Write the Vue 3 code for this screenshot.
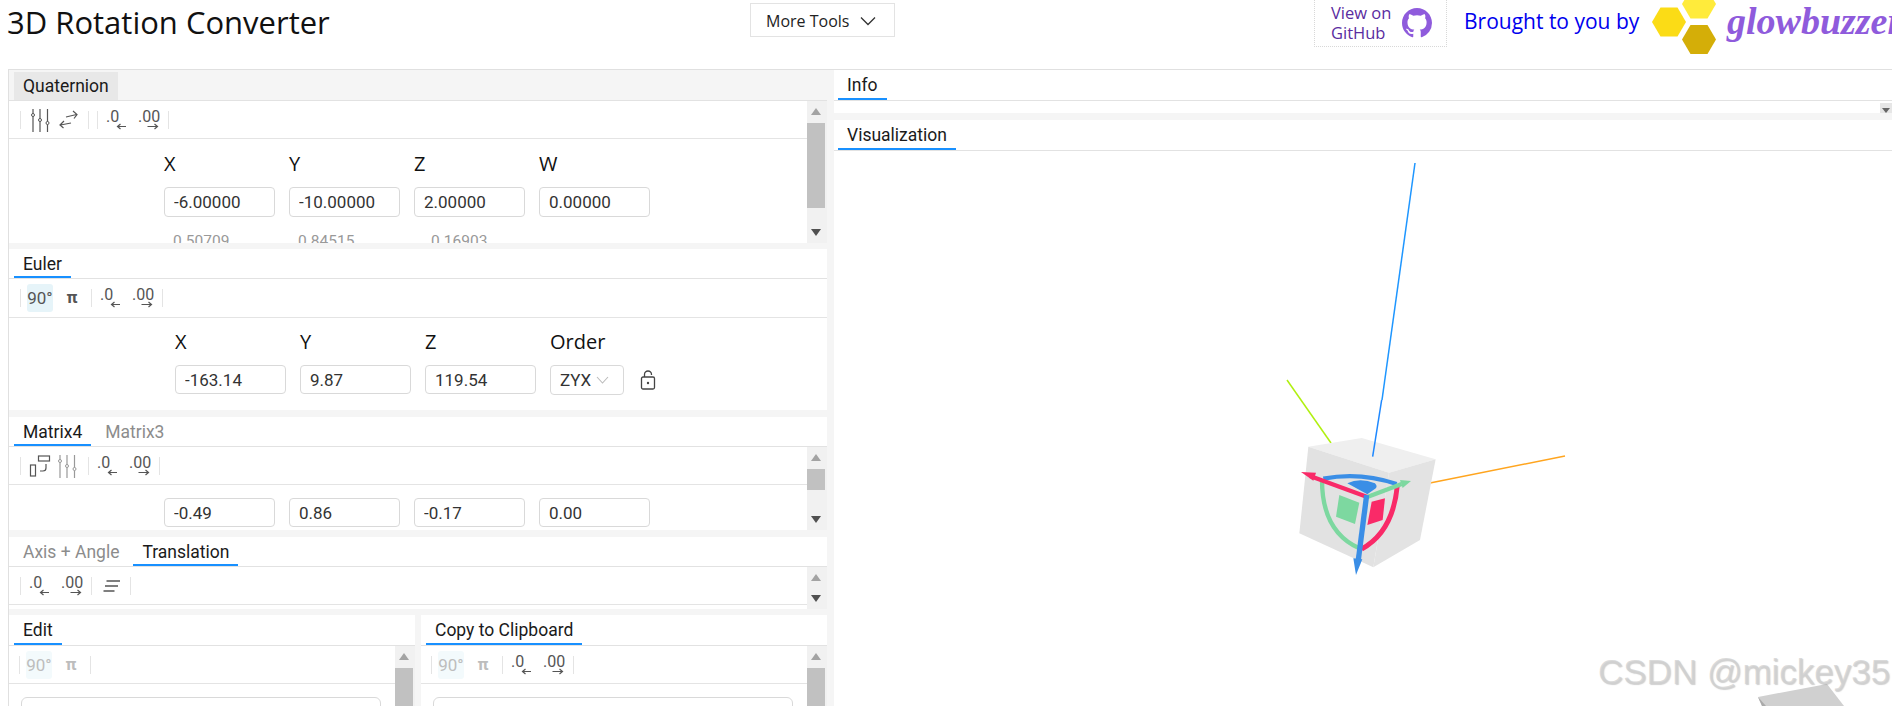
<script setup>
const panels = [
  {
    key: 'q', cls: 'p-q wide tight tall-head',
    tabs: [{ label: 'Quaternion', on: true }],
    tools: ['sep', 'sliders', 'swap', 'sep', 'gap', 'sep', 'dec', 'inc', 'sep'],
    scroll: { thumb: 85 },
    labels: ['X', 'Y', 'Z', 'W'],
    values: ['-6.00000', '-10.00000', '2.00000', '0.00000'],
    hints: ['0.50709', '0.84515', '0.16903', ''],
  },
  {
    key: 'e', cls: 'p-e wide',
    tabs: [{ label: 'Euler', on: true }],
    tools: ['sep', 'deg', 'pi', 'sep', 'dec', 'inc', 'sep'],
    labels: ['X', 'Y', 'Z', 'Order'],
    values: ['-163.14', '9.87', '119.54'],
    order: 'ZYX',
  },
  {
    key: 'm', cls: 'p-m wide',
    tabs: [{ label: 'Matrix4', on: true }, { label: 'Matrix3' }],
    tools: ['sep', 'rotate', 'sliders-soft', 'sep', 'dec', 'inc', 'sep'],
    scroll: { thumb: 21 },
    values: ['-0.49', '0.86', '-0.17', '0.00'],
  },
  {
    key: 't', cls: 'p-t wide tight',
    tabs: [{ label: 'Axis + Angle' }, { label: 'Translation', on: true }],
    tools: ['sep', 'dec', 'inc', 'sep', 'lines', 'sep'],
    scroll: { none: true },
  },
  {
    key: 'edit', cls: 'p-x tall-head dim',
    tabs: [{ label: 'Edit', on: true }],
    tools: ['sep', 'deg', 'pi', 'sep'],
    scroll: { thumb: 60 },
    box: true,
  },
  {
    key: 'copy', cls: 'p-x tall-head dim-first',
    tabs: [{ label: 'Copy to Clipboard', on: true }],
    tools: ['sep', 'deg', 'pi', 'sep', 'dec', 'inc', 'sep'],
    scroll: { thumb: 60 },
    box: true,
  },
]

const G = 'translate(1260 400) scale(.3333)'
const hex = (cx, cy) =>
  [[cx - 17, cy], [cx - 8.5, cy - 14.5], [cx + 8.5, cy - 14.5], [cx + 17, cy], [cx + 8.5, cy + 14.5], [cx - 8.5, cy + 14.5]]
    .map((p) => p.join(',')).join(' ')
</script>

<template>
  <div class="page">
    <svg class="sprite" width="0" height="0" aria-hidden="true">
      <symbol id="i-sliders" viewBox="0 0 32 28">
        <path d="M9 3v23M16 3v23M23.500 3v23" stroke="currentColor" stroke-width="1.200" fill="none" />
        <circle cx="9" cy="9" r="1.500" fill="#fff" stroke="currentColor" />
        <circle cx="16" cy="14" r="1.500" fill="#fff" stroke="currentColor" />
        <circle cx="23.500" cy="17" r="1.500" fill="#fff" stroke="currentColor" />
      </symbol>
      <symbol id="i-swap" viewBox="0 0 29 28">
        <path d="M10 11l10.500-2.500M17 5l4 3.500-3 4M15 17l-10.500 2M8 15l-4 4 3.500 3" stroke="currentColor" stroke-width="1.200" fill="none" />
      </symbol>
      <symbol id="i-rotate" viewBox="0 0 32 28">
        <rect x="6.500" y="13" width="5" height="11" fill="none" stroke="currentColor" stroke-width="1.200" />
        <rect x="14.500" y="4" width="11" height="5" fill="none" stroke="currentColor" stroke-width="1.200" />
        <path d="M22 12v4q0 3-3 3h-3" fill="none" stroke="currentColor" stroke-width="1.200" />
      </symbol>
      <symbol id="i-lines" viewBox="0 0 32 28">
        <path d="M11.500 9h13.500M10 14h13M8.500 19h11" fill="none" stroke="currentColor" stroke-width="1.400" />
      </symbol>
    </svg>

    <header class="top">
      <h1 class="title">3D Rotation Converter</h1>
      <button class="more">
        <span>More Tools</span>
        <svg width="16" height="10" viewBox="0 0 16 10"><path d="M1 1.500l7 7 7-7" fill="none" stroke="#333" stroke-width="1.300" /></svg>
      </button>
      <a class="gh">
        <span class="gh-text">View on<br />GitHub</span>
        <svg width="30" height="32" viewBox="0 0 16 16"><path fill="#8f5bdc" d="M8 0C3.580 0 0 3.580 0 8c0 3.540 2.290 6.530 5.470 7.590.4.070.55-.170.55-.380 0-.190-.010-.820-.010-1.490-2.010.370-2.530-.490-2.690-.940-.090-.230-.480-.940-.820-1.130-.280-.150-.680-.520-.010-.530.630-.010 1.080.580 1.230.820.720 1.210 1.870.870 2.330.660.070-.520.280-.870.510-1.070-1.780-.200-3.640-.890-3.640-3.950 0-.870.310-1.590.820-2.150-.080-.200-.360-1.020.080-2.120 0 0 .670-.210 2.200.820a7.500 7.500 0 0 1 4 0c1.530-1.040 2.200-.820 2.200-.820.440 1.100.160 1.920.080 2.120.510.560.820 1.270.820 2.150 0 3.070-1.870 3.750-3.650 3.950.290.250.540.730.540 1.480 0 1.070-.010 1.930-.010 2.200 0 .210.150.460.550.380A8.010 8.010 0 0 0 16 8c0-4.420-3.580-8-8-8z" /></svg>
      </a>
      <span class="brought">Brought to you by</span>
      <svg class="hex" width="68" height="60" viewBox="1650 0 68 60">
        <polygon :points="hex(1669, 22)" fill="#fbdc16" />
        <polygon :points="hex(1699, 4)" fill="#ffeb3b" />
        <polygon :points="hex(1699, 39.500)" fill="#d4ae08" />
      </svg>
      <span class="brand">glowbuzzer</span>
    </header>

    <main class="main">
      <section class="left">
        <article v-for="p in panels" :key="p.key" class="panel" :class="p.cls">
          <div class="head">
            <span v-for="t in p.tabs" :key="t.label" class="tab" :class="{ on: t.on }">{{ t.label }}</span>
          </div>
          <div class="body">
            <div class="scroller">
              <div class="tools">
                <template v-for="(t, i) in p.tools" :key="i">
                  <i v-if="t === 'sep'" class="sep"></i>
                  <i v-else-if="t === 'gap'" class="gap"></i>
                  <span v-else-if="t === 'deg'" class="btn txt"><b class="hi">90°</b></span>
                  <span v-else-if="t === 'pi'" class="btn txt pi">π</span>
                  <span v-else-if="t === 'dec'" class="btn deci">
                    <em>.0</em>
                    <svg width="32" height="7" viewBox="0 0 32 7"><path d="M25 3.500h-8.500M19.500 1l-3 2.500 3 2.500" stroke="currentColor" stroke-width="1.200" fill="none" /></svg>
                  </span>
                  <span v-else-if="t === 'inc'" class="btn deci">
                    <em>.00</em>
                    <svg width="32" height="7" viewBox="0 0 32 7"><path d="M14.500 3.500h10M21.500 1l3 2.500-3 2.500" stroke="currentColor" stroke-width="1.200" fill="none" /></svg>
                  </span>
                  <svg v-else-if="t === 'swap'" class="btn swap"><use href="#i-swap" /></svg>
                  <svg v-else-if="t === 'sliders-soft'" class="btn soft"><use href="#i-sliders" /></svg>
                  <svg v-else class="btn"><use :href="'#i-' + t" /></svg>
                </template>
              </div>
              <div v-if="p.values" class="fields" :class="{ order: p.order }">
                <span v-for="l in p.labels" :key="l" class="label">{{ l }}</span>
                <input v-for="v in p.values" :key="v" class="inp" :value="v" readonly />
                <div v-if="p.order" class="select">
                  <span>{{ p.order }}</span>
                  <svg width="13" height="8" viewBox="0 0 13 8"><path d="M1 1l5.500 6L12 1" fill="none" stroke="#bbb" stroke-width="1.100" /></svg>
                </div>
                <svg v-if="p.order" class="lock" width="16" height="20" viewBox="0 0 16 20">
                  <rect x="1.500" y="7" width="13" height="12" rx="1.500" fill="none" stroke="#444" stroke-width="1.300" />
                  <path d="M4.500 7V4.500a3.500 3.500 0 0 1 7 0V5" fill="none" stroke="#444" stroke-width="1.300" />
                  <circle cx="8" cy="13" r="1.200" fill="#444" />
                </svg>
                <span v-for="(h, i) in p.hints" :key="i" class="hint">{{ h }}</span>
              </div>
              <div v-if="p.box" class="box"></div>
            </div>
            <div v-if="p.scroll" class="bar" :class="{ none: p.scroll.none }">
              <i class="up"></i>
              <i v-if="p.scroll.thumb" class="thumb" :style="{ height: p.scroll.thumb + 'px' }"></i>
              <i class="down"></i>
            </div>
          </div>
        </article>
      </section>

      <section class="right">
        <article class="info">
          <div class="head"><span class="tab on">Info</span></div>
          <div class="info-body"><i class="split"></i></div>
        </article>
        <article class="viz">
          <div class="head"><span class="tab on">Visualization</span></div>
          <svg class="scene" width="1058" height="555" viewBox="834 151 1058 555">
            <line x1="1415" y1="163" x2="1382" y2="400" stroke="#1e96ff" stroke-width="1.500" />
            <line x1="1287" y1="380" x2="1331" y2="443" stroke="#b0f010" stroke-width="1.500" />
            <line x1="1565" y1="456" x2="1430" y2="483" stroke="#ffa51f" stroke-width="1.500" />
            <g :transform="G">
              <polygon points="145,140 305,114 527,178 387,218" fill="#efefef" />
              <polygon points="145,140 387,218 340,502 118,400" fill="#e2e2e2" />
              <polygon points="387,218 527,178 480,420 340,502" fill="#e3e3e3" />
              <line x1="365" y1="0" x2="338" y2="170" stroke="#1e88ff" stroke-width="4.500" />
              <path d="M186 240Q186 395 298 445" fill="none" stroke="#7dd8a0" stroke-width="13" />
              <path d="M412 255Q400 395 305 447" fill="none" stroke="#f92a68" stroke-width="15" />
              <path d="M190 236Q300 215 410 252" fill="none" stroke="#3a8ee6" stroke-width="13" />
              <path d="M262 250Q300 232 345 250Q357 262 340 270L322 283Z" fill="#3a8ee6" />
              <polygon points="238,285 298,308 285,372 228,350" fill="#7dd8a0" />
              <polygon points="335,305 375,295 368,360 322,375" fill="#f92a68" />
              <line x1="322" y1="291" x2="150" y2="228" stroke="#f92a68" stroke-width="13" />
              <polygon points="123,216 168,218 160,242" fill="#f92a68" />
              <line x1="322" y1="291" x2="425" y2="252" stroke="#7dd8a0" stroke-width="13" />
              <polygon points="453,243 420,240 428,264" fill="#7dd8a0" />
              <line x1="320" y1="285" x2="295" y2="480" stroke="#3a8ee6" stroke-width="16" />
              <polygon points="288,525 280,475 307,478" fill="#3a8ee6" />
            </g>
            <polygon points="1758,697 1827,684 1844,706 1762,706" fill="#d0d0d0" />
            <polygon points="1758,697 1762,706 1766,706" fill="#aaaaaa" />
          </svg>
        </article>
      </section>
    </main>

    <div class="mark">CSDN @mickey35</div>
  </div>
</template>

<style>
html, body { margin: 0; background: #fff; }
</style>

<style scoped>
.page {
  position: relative;
  width: 1892px;
  height: 706px;
  overflow: hidden;
  background: #fff;
  font-family: Roboto, "Liberation Sans", sans-serif;
  color: #1a1a1a;
}
.sprite { position: absolute; }

/* header */
.top {
  display: flex;
  height: 69px;
  overflow: hidden;
  font-family: "Open Sans", "Noto Sans", sans-serif;
}
.top > * { flex: none; }
.title {
  width: 743px;
  margin: 0 0 0 7px;
  font-size: 31px;
  font-weight: 400;
  line-height: 44px;
  color: #111;
  white-space: nowrap;
}
.more {
  display: flex;
  align-items: center;
  justify-content: space-between;
  box-sizing: border-box;
  width: 145px;
  height: 34px;
  margin-top: 3px;
  padding: 2px 18px 0 15px;
  background: #fff;
  border: 1px solid #e3e3e3;
  font: 16px "Open Sans", sans-serif;
  color: #222;
}
.gh {
  display: flex;
  align-items: center;
  justify-content: space-between;
  box-sizing: border-box;
  width: 133px;
  height: 47px;
  margin-left: 419px;
  padding: 0 14px 0 16px;
  border: 1px dotted #d8d8d8;
  border-top: 0;
}
.gh-text { font-size: 16.500px; line-height: 20px; color: #5a2ca0; }
.brought {
  width: 186px;
  margin-left: 17px;
  font-size: 21px;
  line-height: 42px;
  color: #0000ee;
  white-space: nowrap;
}
.brand {
  margin-left: 9px;
  font: italic 700 38px/42px "Liberation Serif", serif;
  color: #8f5bdc;
}

/* frame */
.main {
  display: flex;
  gap: 7px;
  height: 636px;
  margin-left: 8px;
  background: #f5f5f5;
  border-top: 1px solid #e0e0e0;
  border-left: 1px solid #e0e0e0;
}
.left {
  display: grid;
  flex: none;
  grid-template-columns: 406px 406px;
  grid-template-rows: 179px 168px 120px 78px 91px;
  column-gap: 6px;
  width: 818px;
}
.right { display: flex; flex: 1; flex-direction: column; gap: 7px; min-width: 0; }

/* panels */
.panel {
  display: flex;
  flex-direction: column;
  min-height: 0;
  margin-bottom: 7px;
  overflow: hidden;
  background: #fff;
}
.panel.tight { margin-bottom: 6px; }
.panel.p-x { margin-bottom: 0; }
.panel.wide { grid-column: 1 / 3; }

.head {
  display: flex;
  flex: none;
  gap: 5px;
  box-sizing: border-box;
  height: 30px;
  padding-left: 5px;
  border-bottom: 1px solid #e2e2e2;
  background: #fff;
}
.tall-head .head { height: 31px; }
.p-q .head { background: #f5f5f5; }
.tab {
  box-sizing: border-box;
  height: 29px;
  padding: 0 9px;
  font-size: 17.500px;
  line-height: 31px;
  color: #8c8c8c;
  white-space: nowrap;
}
.tab.on { color: #1a1a1a; border-bottom: 2px solid #1890ff; }
.p-q .head .tab {
  height: 28px;
  margin-top: 2px;
  line-height: 28px;
  background: #e8e8e8;
  border-bottom: 0;
}
.tall-head .head .tab { height: 30px; }
.p-q.tall-head .head .tab { height: 28px; }

.body { display: flex; flex: 1; min-height: 0; }
.scroller { flex: 1; min-width: 0; overflow: hidden; }

.tools {
  display: flex;
  align-items: center;
  box-sizing: border-box;
  height: 38px;
  padding-left: 8px;
  color: #555;
  border-bottom: 1px solid #e4e4e4;
}
.p-e .tools { height: 39px; }
.p-x .tools { padding-left: 7px; }
.sep { flex: none; width: 1px; height: 18px; margin: 0 3px; background: #e4e4e4; }
.gap { flex: none; width: 2px; }
.btn { flex: none; display: block; width: 32px; height: 28px; }
.btn.swap { width: 29px; }
.btn.soft { margin: 0 2px 0 -5px; color: #999; }
.btn.txt {
  box-sizing: border-box;
  padding: 0 3px;
  font-size: 17px;
  line-height: 28px;
  text-align: center;
}
.btn.pi { font-weight: 700; font-size: 17px; line-height: 26px; }
.hi {
  display: block;
  height: 28px;
  font-weight: 400;
  background: #e6f4f9;
  border-radius: 3px;
}
.deci { box-sizing: border-box; padding-top: 3px; }
.deci em {
  display: block;
  height: 13px;
  padding-left: 5px;
  font-size: 16px;
  font-style: normal;
  line-height: 16px;
}
.deci svg { display: block; margin-top: 1px; }
.dim .tools { color: #bdbdbd; }
.dim .hi { background: #f3fafc; }
.dim-first .btn.txt { color: #bdbdbd; }
.dim-first .hi { background: #f3fafc; }

/* fields */
.fields {
  display: grid;
  grid-template-columns: repeat(4, 111px);
  column-gap: 14px;
  padding-left: 155px;
}
.fields.order { grid-template-columns: 111px 111px 111px 74px 24px; padding-left: 166px; }
.fields.order .inp:first-of-type { grid-column: 1; }
.label {
  height: 25px;
  margin-bottom: 11px;
  font: 20px/25px "Open Sans", sans-serif;
  color: #111;
}
.p-q .fields { padding-top: 12px; }
.p-e .fields { padding-top: 11px; }
.p-m .fields { padding-top: 13px; }
.inp {
  box-sizing: border-box;
  width: 111px;
  height: 30px;
  padding: 0 9px;
  background: #fff;
  border: 1px solid #d9d9d9;
  border-radius: 4px;
  outline: 0;
  font: 17px Roboto, sans-serif;
  color: #333;
}
.p-e .inp, .p-m .inp { height: 29px; }
.select {
  display: flex;
  align-items: center;
  justify-content: space-between;
  box-sizing: border-box;
  height: 30px;
  padding: 0 14px 0 9px;
  border: 1px solid #d9d9d9;
  border-radius: 4px;
  font-size: 17px;
  color: #333;
}
.lock { align-self: center; margin-left: 2px; }
.hint {
  margin-top: 15px;
  padding-left: 9px;
  font-size: 15.500px;
  line-height: 18px;
  color: #999;
}
.hint:nth-last-child(2) { padding-left: 17px; }
.box {
  box-sizing: border-box;
  height: 60px;
  margin: 13px 14px 0 12px;
  border: 1px solid #d9d9d9;
  border-radius: 6px;
}

/* scrollbar */
.bar {
  display: flex;
  flex: none;
  flex-direction: column;
  align-items: center;
  box-sizing: border-box;
  width: 20px;
  padding: 7px 2px 7px 0;
  background: #f1f1f1;
}
.up, .down { flex: none; width: 0; height: 0; border-left: 5px solid transparent; border-right: 5px solid transparent; }
.up { border-bottom: 7px solid #a3a3a3; }
.down { margin-top: auto; border-top: 7px solid #505050; }
.thumb { flex: none; width: 18px; margin-top: 8px; background: #c1c1c1; }
.p-x .bar { padding-bottom: 0; }
.p-x .down { display: none; }

/* right */
.info { flex: none; height: 43px; background: #fff; }
.right .head { height: 31px; padding-left: 4px; }
.right .tab { height: 30px; }
.info-body { display: flex; justify-content: flex-end; height: 12px; }
.split {
  display: flex;
  justify-content: center;
  align-items: flex-end;
  width: 12px;
  height: 10px;
  margin-top: 2px;
  background: #e6e6e6;
}
.split::after {
  content: "";
  border-left: 4px solid transparent;
  border-right: 4px solid transparent;
  border-top: 5px solid #666;
}
.viz { flex: 1; min-height: 0; background: #fff; overflow: hidden; }
.scene { display: block; }

.mark {
  position: absolute;
  left: 1598px;
  top: 652px;
  font: 35px/40px "Liberation Sans", sans-serif;
  color: rgba(208, 208, 208, .75);
  text-shadow: 1px 1px 1px rgba(150, 150, 150, .45);
  white-space: nowrap;
}
</style>
